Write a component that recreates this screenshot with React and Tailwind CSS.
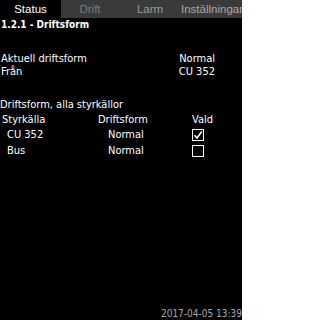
const sources = [
  { name: 'CU 352', mode: 'Normal', selected: true },
  { name: 'Bus', mode: 'Normal', selected: false },
]

const Box = ({ checked }) => (
  <div className="w-[12px] h-[12px] border border-white flex items-center justify-center">
    {checked && (
      <svg width="10" height="10" viewBox="0 0 10 10" fill="none">
        <path d="M1.5 5.2 L4 8 L8.8 1.5" stroke="white" strokeWidth="1.6" />
      </svg>
    )}
  </div>
)

export default function App() {
  return (
    <div
      className="w-[242px] h-[320px] bg-black text-white flex flex-col overflow-hidden"
      style={{ fontFamily: '"DejaVu Sans Condensed", "Liberation Sans", sans-serif' }}
    >
      {/* Tabs */}
      <div
        className="flex h-[18px] text-[11.5px] leading-[18px] bg-[#3a3a3a]"
        style={{ fontFamily: '"Liberation Sans", Arial, sans-serif' }}
      >
        <div className="w-[61px] shrink-0 bg-black text-white text-center">Status</div>
        <div className="w-[58px] shrink-0 text-center text-[#7c7c7c]">Drift</div>
        <div className="w-[62px] shrink-0 text-center text-[#9a9a9a]">Larm</div>
        <div className="flex-1 flex justify-end text-[#a8a8a8] whitespace-nowrap">Inställningar</div>
      </div>

      <div className="pl-[1px] pt-[1px] text-[10px] leading-[12px] font-bold">1.2.1 - Driftsform</div>

      {/* Current mode */}
      <div className="mt-[21px] text-[11px] leading-[13px] pr-[27px]">
        <div className="flex justify-between pl-[1px]">
          <span>Aktuell driftsform</span>
          <span>Normal</span>
        </div>
        <div className="flex justify-between pl-[1px]">
          <span>Från</span>
          <span>CU 352</span>
        </div>
      </div>

      {/* All sources */}
      <div className="mt-[20px] text-[11px] leading-[13px]">
        <div>Driftsform, alla styrkällor</div>
        <div className="flex mt-[2px]">
          <span className="w-[98px] pl-[2px]">Styrkälla</span>
          <span className="w-[94px]">Driftsform</span>
          <span>Vald</span>
        </div>
        {sources.map((s) => (
          <div key={s.name} className="flex items-center h-[15px] mt-[1px]">
            <span className="w-[108px] pl-[7px]">{s.name}</span>
            <span className="w-[84px]">{s.mode}</span>
            <Box checked={s.selected} />
          </div>
        ))}
      </div>

      <div className="mt-auto mb-[1px] text-right text-[10px] leading-[11px] text-[#a8a8a8]">
        2017-04-05 13:39
      </div>
    </div>
  )
}
